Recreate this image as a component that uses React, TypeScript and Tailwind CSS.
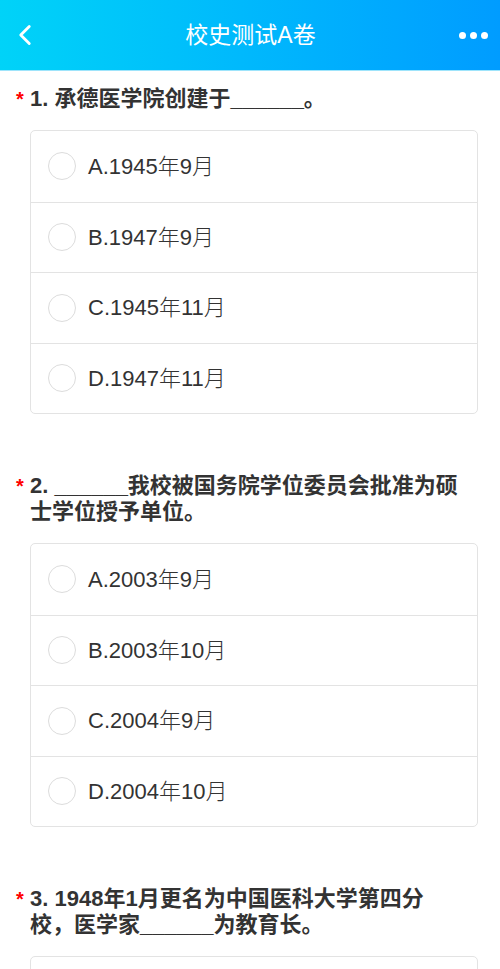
import { ChevronLeft } from 'lucide-react'

const questions = [
  {
    title: '1. 承德医学院创建于______。',
    options: ['A.1945年9月', 'B.1947年9月', 'C.1945年11月', 'D.1947年11月'],
  },
  {
    title: '2. ______我校被国务院学位委员会批准为硕士学位授予单位。',
    options: ['A.2003年9月', 'B.2003年10月', 'C.2004年9月', 'D.2004年10月'],
  },
  {
    title: '3. 1948年1月更名为中国医科大学第四分校，医学家______为教育长。',
    options: ['A.', 'B.', 'C.', 'D.'],
  },
]

function Question({ title, options }: { title: string; options: string[] }) {
  return (
    <div className="mb-[44px]">
      <div className="flex pl-[16px] pr-[40px] pt-[15px]">
        <span className="w-[14px] shrink-0 text-[20px] leading-[26px] font-bold text-[#ff0000]">*</span>
        <h2 className="text-[22px] leading-[26px] font-semibold text-[#333]">{title}</h2>
      </div>
      <div className="ml-[30px] mr-[22px] mt-[18px] rounded-[5px] border border-[#e3e3e3]">
        {options.map((opt, i) => (
          <div
            key={opt}
            className={`flex h-[70.5px] items-center ${i > 0 ? 'border-t border-[#e3e3e3]' : ''}`}
          >
            <span className="ml-[17px] h-[28px] w-[28px] rounded-full border border-[#dcdcdc]" />
            <span className="ml-[12px] text-[22px] font-light text-[#333]">{opt}</span>
          </div>
        ))}
      </div>
    </div>
  )
}

export default function App() {
  return (
    <div
      className="h-[969px] w-[500px] overflow-hidden bg-white"
      style={{ fontFamily: '"Liberation Sans", "Noto Sans CJK SC", sans-serif' }}
    >
      <header className="flex h-[71px] items-center justify-between border-b border-[#9ee4fb] bg-gradient-to-r from-[#00d3f8] to-[#009cff] px-[8px]">
        <ChevronLeft className="h-[34px] w-[34px] text-white" strokeWidth={2} />
        <h1 className="text-[23px] text-white">校史测试A卷</h1>
        <div className="flex gap-[4px] pr-[4px]">
          <span className="h-[7px] w-[7px] rounded-full bg-white" />
          <span className="h-[7px] w-[7px] rounded-full bg-white" />
          <span className="h-[7px] w-[7px] rounded-full bg-white" />
        </div>
      </header>
      {questions.map((q) => (
        <Question key={q.title} title={q.title} options={q.options} />
      ))}
    </div>
  )
}
